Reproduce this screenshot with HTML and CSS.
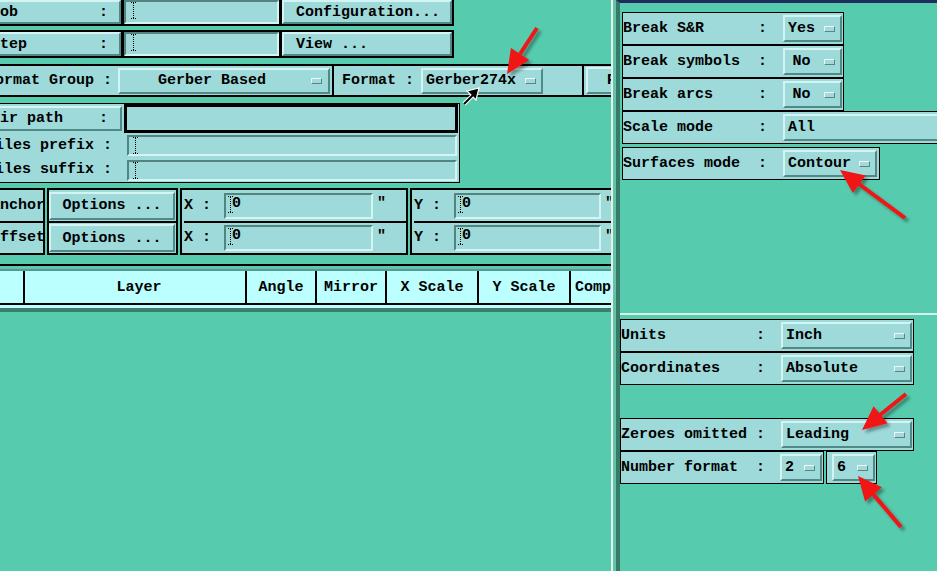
FILE: index.html
```html
<!DOCTYPE html>
<html lang="en">
<head>
    <meta charset="UTF-8">
    <title>Output Parameters</title>
    <link rel="stylesheet" href="styles.css">
</head>
<body>
<div class="screen">
    <!-- left side: job / format / table -->
    <div class="left">
        <div class="left-inner">
            <div class="bar">
                <div class="btn lbl-btn">Job         :</div>
                <div class="field job-field"><svg class="ibeam" width="5" height="17" viewBox="0 0 5 17"><path d="M0 0.5h5M0 16.5h5M2.5 1v15" stroke="#000" stroke-dasharray="1 1"/></svg></div>
                <div class="btn cmd-btn">Configuration...</div>
            </div>
            <div class="bar bar-step">
                <div class="btn lbl-btn">Step        :</div>
                <div class="field job-field"><svg class="ibeam" width="5" height="17" viewBox="0 0 5 17"><path d="M0 0.5h5M0 16.5h5M2.5 1v15" stroke="#000" stroke-dasharray="1 1"/></svg></div>
                <div class="btn cmd-btn">View ...</div>
            </div>

            <div class="format-bar">
                <span class="plain fmt-group">Format Group :</span>
                <div class="btn opt opt-center gb"><span class="opt-text">Gerber Based</span><span class="ind"></span></div>
                <span class="vsep"></span>
                <span class="plain fmt-label">Format :</span>
                <div class="btn opt fmt-opt"><span class="opt-text">Gerber274x</span><span class="ind"></span></div>
                <span class="vsep far"></span>
                <div class="btn param-btn">Parameters...</div>
            </div>

            <div class="path-box">
                <div class="path-row">
                    <div class="btn lbl-btn dir-btn">Dir path    :</div>
                    <div class="focus-field"></div>
                </div>
                <div class="path-row sub">
                    <span class="plain path-label">Files prefix :</span>
                    <div class="field path-field"><svg class="ibeam" width="5" height="17" viewBox="0 0 5 17"><path d="M0 0.5h5M0 16.5h5M2.5 1v15" stroke="#000" stroke-dasharray="1 1"/></svg></div>
                </div>
                <div class="path-row sub last">
                    <span class="plain path-label">Files suffix :</span>
                    <div class="field path-field"><svg class="ibeam" width="5" height="17" viewBox="0 0 5 17"><path d="M0 0.5h5M0 16.5h5M2.5 1v15" stroke="#000" stroke-dasharray="1 1"/></svg></div>
                </div>
            </div>

            <div class="coords">
                <div class="col col-name">
                    <div class="cell">Anchor</div>
                    <div class="cell">Offset</div>
                </div>
                <div class="col col-opts">
                    <div class="cell"><div class="btn opts-btn">Options ...</div></div>
                    <div class="cell"><div class="btn opts-btn">Options ...</div></div>
                </div>
                <div class="col col-xy">
                    <div class="cell">
                        <span class="xy-label">X :</span>
                        <div class="field xy-field"><svg class="ibeam" width="5" height="17" viewBox="0 0 5 17"><path d="M0 0.5h5M0 16.5h5M2.5 1v15" stroke="#000" stroke-dasharray="1 1"/></svg>0</div>
                        <span class="unit">"</span>
                    </div>
                    <div class="cell">
                        <span class="xy-label">X :</span>
                        <div class="field xy-field"><svg class="ibeam" width="5" height="17" viewBox="0 0 5 17"><path d="M0 0.5h5M0 16.5h5M2.5 1v15" stroke="#000" stroke-dasharray="1 1"/></svg>0</div>
                        <span class="unit">"</span>
                    </div>
                </div>
                <div class="col col-xy col-y">
                    <div class="cell">
                        <span class="xy-label">Y :</span>
                        <div class="field xy-field"><svg class="ibeam" width="5" height="17" viewBox="0 0 5 17"><path d="M0 0.5h5M0 16.5h5M2.5 1v15" stroke="#000" stroke-dasharray="1 1"/></svg>0</div>
                        <span class="unit">"</span>
                    </div>
                    <div class="cell">
                        <span class="xy-label">Y :</span>
                        <div class="field xy-field"><svg class="ibeam" width="5" height="17" viewBox="0 0 5 17"><path d="M0 0.5h5M0 16.5h5M2.5 1v15" stroke="#000" stroke-dasharray="1 1"/></svg>0</div>
                        <span class="unit">"</span>
                    </div>
                </div>
            </div>

            <div class="table-rule"></div>
            <div class="table">
                <div class="thead">
                    <div class="th th-sel"></div>
                    <div class="th th-layer">Layer</div>
                    <div class="th th-sm">Angle</div>
                    <div class="th th-sm">Mirror</div>
                    <div class="th th-md">X Scale</div>
                    <div class="th th-md">Y Scale</div>
                    <div class="th th-last">Comp</div>
                </div>
            </div>
        </div>
    </div>

    <div class="split"></div>

    <!-- right side: output options -->
    <div class="right">
        <div class="right-top">
            <div class="rrow r-short">
                <span class="rlabel">Break S&amp;R      :</span>
                <div class="btn opt yn"><span class="opt-text w3">Yes</span><span class="ind"></span></div>
            </div>
            <div class="rrow r-short">
                <span class="rlabel">Break symbols  :</span>
                <div class="btn opt yn"><span class="opt-text w3">No</span><span class="ind"></span></div>
            </div>
            <div class="rrow r-short">
                <span class="rlabel">Break arcs     :</span>
                <div class="btn opt yn"><span class="opt-text w3">No</span><span class="ind"></span></div>
            </div>
            <div class="rrow r-wide">
                <span class="rlabel">Scale mode     :</span>
                <div class="btn opt scale-opt"><span class="opt-text">All</span><span class="ind"></span></div>
            </div>
            <div class="rrow r-surf">
                <span class="rlabel">Surfaces mode  :</span>
                <div class="btn opt surf-opt"><span class="opt-text">Contour</span><span class="ind"></span></div>
            </div>
        </div>
        <div class="right-bottom">
            <div class="rrow r-low">
                <span class="rlabel low">Units          :</span>
                <div class="btn opt low-opt"><span class="opt-text">Inch</span><span class="ind"></span></div>
            </div>
            <div class="rrow r-low">
                <span class="rlabel low">Coordinates    :</span>
                <div class="btn opt low-opt"><span class="opt-text">Absolute</span><span class="ind"></span></div>
            </div>
            <div class="rrow r-low r-zero">
                <span class="rlabel low">Zeroes omitted :</span>
                <div class="btn opt low-opt"><span class="opt-text">Leading</span><span class="ind"></span></div>
            </div>
            <div class="num-line">
                <div class="rrow r-num">
                    <span class="rlabel low">Number format  :</span>
                    <div class="btn opt num-opt"><span class="opt-text">2</span><span class="ind"></span></div>
                </div>
                <div class="rrow r-num2">
                    <div class="btn opt num-opt"><span class="opt-text">6</span><span class="ind"></span></div>
                </div>
            </div>
        </div>
    </div>

    <!-- annotations drawn over the screenshot -->
    <svg class="marks" width="937" height="571" viewBox="0 0 937 571">
        <defs>
            <filter id="shade" x="-30%" y="-30%" width="170%" height="170%">
                <feDropShadow dx="3" dy="3" stdDeviation="1.5" flood-color="#000" flood-opacity="0.35"/>
            </filter>
        </defs>
        <g class="red-arrow" filter="url(#shade)">
            <line x1="537" y1="28" x2="520" y2="54"/>
            <polygon points="507,74 510.9,47.9 529.3,59.9"/>
        </g>
        <g class="red-arrow" filter="url(#shade)">
            <line x1="905" y1="218" x2="859" y2="184"/>
            <polygon points="840,170 865.8,175.5 852.8,193.1"/>
        </g>
        <g class="red-arrow" filter="url(#shade)">
            <line x1="906" y1="394" x2="880" y2="415"/>
            <polygon points="862,430 873.6,406.3 887.6,423.3"/>
        </g>
        <g class="red-arrow" filter="url(#shade)">
            <line x1="901" y1="527" x2="873" y2="494"/>
            <polygon points="858,476 881.9,487.3 865.1,501.5"/>
        </g>
        <g class="pointer">
            <path d="M464 104 L473 95" stroke="#fff" stroke-width="4"/>
            <polygon points="479,88 467,91 476,100" fill="#000" stroke="#fff" stroke-width="1.2"/>
            <path d="M464 104 L473 95" stroke="#000" stroke-width="2"/>
        </g>
    </svg>
</div>
</body>
</html>
```

FILE: styles.css
```css
/* General page */
* {
    box-sizing: border-box;
}

body {
    margin: 0;
    background-color: #56cbad;
    font-family: "Liberation Mono", "DejaVu Sans Mono", monospace;
    font-weight: bold;
    font-size: 15px;
    line-height: 16px;
    color: #000;
    overflow: hidden;
}

.screen {
    position: relative;
    display: flex;
    width: 937px;
    height: 571px;
    overflow: hidden;
}

/* Motif-like widgets */
.btn {
    display: flex;
    flex-shrink: 0;
    align-items: center;
    background-color: #9edada;
    border: 2px solid;
    border-color: #d4f3f3 #4f8a87 #4f8a87 #d4f3f3;
    white-space: pre;
    padding-top: 1px;
}

.field {
    display: flex;
    flex-shrink: 0;
    align-items: flex-start;
    background-color: #9edada;
    border: 2px solid;
    border-color: #52857f #d4f3f3 #d4f3f3 #52857f;
    padding: 0 0 0 2px;
}

.ibeam {
    flex: none;
    display: block;
    margin-right: -1px;
}

.plain {
    flex-shrink: 0;
    white-space: pre;
}

.opt {
    padding: 1px 5px 0 3px;
}

.opt-text {
    white-space: pre;
}

.opt-center .opt-text {
    flex: 1;
    text-align: center;
    padding-right: 10px;
}

.w3 {
    width: 27px;
    text-align: center;
}

.ind {
    flex: none;
    width: 11px;
    height: 6px;
    margin-left: auto;
    margin-top: -1px;
    background-color: #a9d6d6;
    border: 1px solid;
    border-color: #e6fbfb #4f8a87 #4f8a87 #e6fbfb;
}

/* Left panel */
.left {
    width: 611px;
    flex: none;
    overflow: hidden;
}

.left-inner {
    width: 720px;
    margin-left: -16px;
    margin-top: -2px;
}

.bar {
    display: flex;
    width: max-content;
    height: 28px;
    gap: 3px;
    padding: 2px;
    background-color: #000;
    margin-bottom: 4px;
}

.bar-step {
    margin-bottom: 6px;
}

.lbl-btn {
    width: 135px;
    padding-left: 3px;
}

.job-field {
    width: 155px;
    padding-left: 5px;
}

.cmd-btn {
    width: 170px;
    padding-left: 12px;
}

.format-bar {
    display: flex;
    align-items: center;
    width: 720px;
    height: 33px;
    background-color: #9edada;
    border: 2px solid #000;
    border-right: none;
    margin-bottom: 6px;
}

.fmt-group {
    width: 132px;
    padding-top: 1px;
}

.gb {
    width: 212px;
    height: 26px;
    padding-right: 6px;
}

.vsep {
    flex-shrink: 0;
    align-self: stretch;
    width: 2px;
    background-color: #000;
    margin: 0 8px 0 2px;
}

.vsep.far {
    margin: 0 2px 0 39px;
}

.fmt-label {
    width: 79px;
    padding-top: 1px;
}

.fmt-opt {
    width: 122px;
    height: 26px;
}

.param-btn {
    width: 110px;
    height: 27px;
    padding-left: 19px;
}

.path-box {
    width: 476px;
    background-color: #9edada;
    border: 1px solid #000;
    margin-bottom: 5px;
}

.path-row {
    display: flex;
    align-items: center;
    height: 29px;
}

.path-row.sub {
    height: 25px;
}

.path-row.last {
    height: 24px;
}

.dir-btn {
    width: 136px;
    height: 25px;
    margin: 0 2px 0 1px;
}

.focus-field {
    flex-shrink: 0;
    width: 334px;
    height: 29px;
    background-color: #9edada;
    border: 3px solid #000;
}

.path-label {
    width: 142px;
    padding-left: 1px;
}

.path-field {
    width: 330px;
    height: 21px;
    padding-left: 4px;
}

.coords {
    display: flex;
    gap: 2px;
    height: 67px;
}

.col {
    display: flex;
    flex-direction: column;
    flex-shrink: 0;
    background-color: #9edada;
    border: 2px solid #000;
}

.cell {
    display: flex;
    align-items: center;
    height: 31px;
    white-space: pre;
}

.cell + .cell {
    height: 32px;
    border-top: 2px solid #000;
}

.col-name {
    width: 61px;
    padding-left: 5px;
}

.col-opts {
    width: 131px;
}

.opts-btn {
    width: 126px;
    height: 28px;
    justify-content: center;
}

.col-xy {
    width: 228px;
    padding-left: 2px;
}

.col-y {
    width: 240px;
}

.xy-label {
    flex-shrink: 0;
    width: 40px;
    white-space: pre;
}

.xy-field {
    width: 149px;
    height: 26px;
    padding-top: 1px;
}

.col-y .xy-field {
    width: 147px;
}

.unit {
    margin-left: 4px;
    margin-top: -3px;
}

/* Layer table */
.table-rule {
    width: 720px;
    height: 2px;
    margin-top: 9px;
    background-color: #000;
}

.table {
    width: 720px;
    margin-top: 3px;
    background-color: #bbffff;
    border-top: 2px solid #5d9792;
    border-bottom: 4px solid #3c7e6e;
    padding-bottom: 3px;
}

.thead {
    display: flex;
    height: 34px;
    border-bottom: 2px solid #000;
}

.th {
    display: flex;
    flex-shrink: 0;
    align-items: center;
    justify-content: center;
    border-right: 2px solid #000;
    white-space: pre;
    padding-top: 2px;
}

.th-sel {
    width: 41px;
}

.th-layer {
    width: 222px;
    padding-left: 8px;
}

.th-sm {
    width: 70px;
}

.th-md {
    width: 92px;
}

.th-last {
    width: 120px;
    justify-content: flex-start;
    padding-left: 4px;
}

/* Divider between panels */
.split {
    width: 5px;
    flex: none;
    border-left: 2px solid #e4f2ee;
    background-color: #62c3a8;
}

/* Right panel */
.right {
    flex: 1;
    border-left: 4px solid #367a6a;
    border-top: 3px solid #1f2d5c;
}

.right-top {
    height: 310px;
    padding: 9px 0 0 2px;
}

.right-bottom {
    border-top: 2px solid #d8f0ec;
    padding-top: 4px;
}

.rrow {
    display: flex;
    align-items: center;
    height: 33px;
    background-color: #9edada;
    border: 1px solid #000;
}

.rlabel {
    width: 158px;
    flex: none;
    margin-right: 2px;
    padding-top: 1px;
    white-space: pre;
}

.rlabel.low {
    width: 159px;
    margin-right: 1px;
}

.opt.yn,
.opt.scale-opt,
.opt.surf-opt,
.opt.low-opt,
.opt.num-opt {
    height: 27px;
}

.r-short {
    width: 222px;
}

.yn {
    width: 59px;
}

.r-wide {
    width: 340px;
}

.scale-opt {
    width: 200px;
}

.r-surf {
    width: 258px;
    margin-top: 3px;
}

.surf-opt {
    width: 94px;
}

.r-low {
    width: 294px;
}

.low-opt {
    width: 131px;
}

.r-zero {
    margin-top: 33px;
}

.num-line {
    display: flex;
    gap: 2px;
}

.r-num {
    width: 204px;
}

.r-num .rlabel.low {
    margin-right: 0;
}

.num-opt {
    width: 42px;
}

.r-num2 {
    width: 51px;
    padding-left: 5px;
}

.r-num2 .num-opt {
    width: 43px;
}

/* Annotations */
.marks {
    position: absolute;
    left: 0;
    top: 0;
    pointer-events: none;
}

.red-arrow line {
    stroke: #f01414;
    stroke-width: 4;
}

.red-arrow polygon {
    fill: #f01414;
}
```
